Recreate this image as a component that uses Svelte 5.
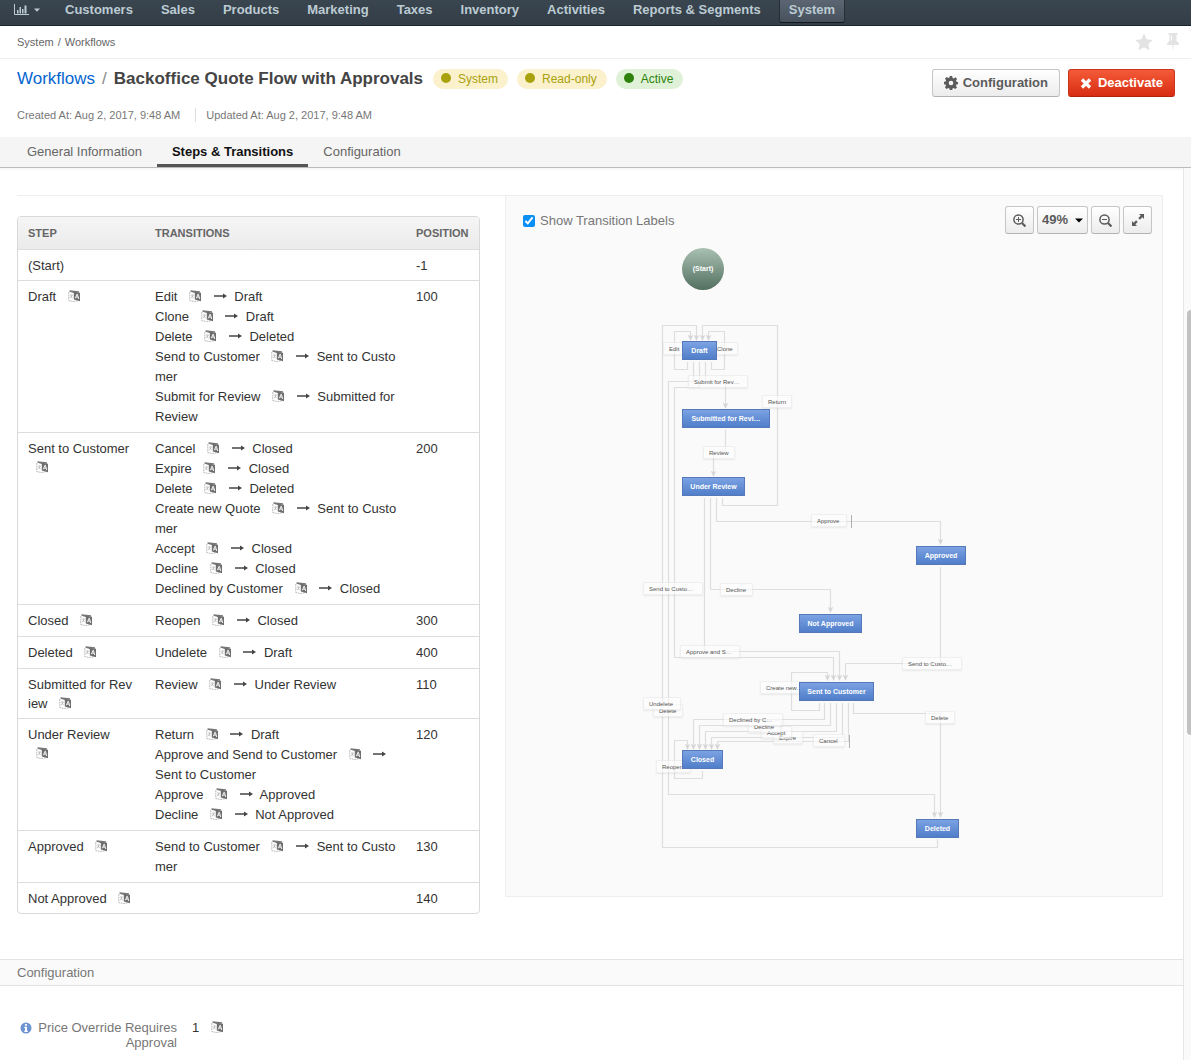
<script>
  const menu = ['Customers', 'Sales', 'Products', 'Marketing', 'Taxes', 'Inventory', 'Activities', 'Reports & Segments', 'System'];

  const badges = [
    { text: 'System', kind: 'warn' },
    { text: 'Read-only', kind: 'warn' },
    { text: 'Active', kind: 'ok' },
  ];

  const tabs = ['General Information', 'Steps & Transitions', 'Configuration'];

  const steps = [
    { name: '(Start)', position: '-1', plain: true, transitions: [] },
    {
      name: 'Draft',
      position: '100',
      transitions: [
        ['Edit', 'Draft'],
        ['Clone', 'Draft'],
        ['Delete', 'Deleted'],
        ['Send to Customer', 'Sent to Customer'],
        ['Submit for Review', 'Submitted for Review'],
      ],
    },
    {
      name: 'Sent to Customer',
      position: '200',
      transitions: [
        ['Cancel', 'Closed'],
        ['Expire', 'Closed'],
        ['Delete', 'Deleted'],
        ['Create new Quote', 'Sent to Customer'],
        ['Accept', 'Closed'],
        ['Decline', 'Closed'],
        ['Declined by Customer', 'Closed'],
      ],
    },
    { name: 'Closed', position: '300', transitions: [['Reopen', 'Closed']] },
    { name: 'Deleted', position: '400', transitions: [['Undelete', 'Draft']] },
    { name: 'Submitted for Review', position: '110', transitions: [['Review', 'Under Review']] },
    {
      name: 'Under Review',
      position: '120',
      transitions: [
        ['Return', 'Draft'],
        ['Approve and Send to Customer', 'Sent to Customer'],
        ['Approve', 'Approved'],
        ['Decline', 'Not Approved'],
      ],
    },
    { name: 'Approved', position: '130', transitions: [['Send to Customer', 'Sent to Customer']] },
    { name: 'Not Approved', position: '140', transitions: [] },
  ];

  // Diagram: nodes and labels are [text, x, y, width] on the canvas.
  const nodes = [
    ['Draft', 42, 101, 35],
    ['Submitted for Revi…', 42, 169, 88],
    ['Under Review', 42, 237, 63],
    ['Approved', 276, 306, 50],
    ['Not Approved', 159, 374, 63],
    ['Sent to Customer', 159, 442, 75],
    ['Closed', 42, 510, 41],
    ['Deleted', 276, 579, 43],
  ];

  const labels = [
    ['Edit', 23, 102, 22],
    ['Clone', 71, 102, 27],
    ['Submit for Rev…', 48, 135, 60],
    ['Return', 122, 155, 30],
    ['Review', 63, 206, 32],
    ['Approve', 171, 274, 36],
    ['Decline', 80, 343, 33],
    ['Send to Custo…', 3, 342, 60],
    ['Approve and S…', 40, 405, 60],
    ['Create new…', 120, 441, 61],
    ['Delete', 13, 464, 30],
    ['Undelete', 3, 457, 38],
    ['Expire', 133, 491, 30],
    ['Accept', 121, 486, 31],
    ['Decline', 108, 480, 33],
    ['Declined by C…', 83, 473, 60],
    ['Cancel', 173, 494, 32],
    ['Reopen', 16, 520, 35],
    ['Send to Custo…', 262, 417, 60],
    ['Delete', 285, 471, 30],
  ];

  const edges = [
    'M297.5 599V607.5H22.5V85.5H56.5V97',
    'M82.5 258V265.5H137.5V85.5H62.5V97',
    'M47.5 122V129.5H34.5V91.5H50.5V97',
    'M71.5 122V129.5H84.5V91.5H68.5V97',
    'M53.5 122V141.5H28.5V554.5H294.5V574',
    'M59.5 122V147.5H34.5V417.5H193.5V437',
    'M65.5 122V141.5H85.5V165',
    'M85.5 190V211.5H73.5V233',
    'M64.5 258V411.5H199.5V437',
    'M70.5 258V349.5H190.5V369',
    'M76.5 258V281.5H300.5V301',
    'M300.5 327V423.5H205.5V437',
    'M179.5 463V470.5H151.5V432.5H187.5V437',
    'M184.5 463V479.5H53.5V506',
    'M190.5 463V485.5H59.5V506',
    'M196.5 463V491.5H65.5V506',
    'M202.5 463V497.5H71.5V506',
    'M208.5 463V501.5H77.5V506',
    'M213.5 463V473.5H300.5V574',
    'M62.5 531V538.5H34.5V500.5H47.5V506',
  ];
</script>

{#snippet translate()}
  <svg class="translate" viewBox="0 0 12 12" aria-hidden="true">
    <path d="M.8 2v8.600l4.700.9 4.500-.8" fill="none" stroke="#bbb" stroke-dasharray="2 .6" />
    <path d="M1.500 .3L11 1.200v1.300L5.800 3 1.500 1.800z" fill="#777" />
    <path d="M2.200 5h2.400M4.200 5L2.400 8M3 6.300l1.600 1.500" fill="none" stroke="#aaa" stroke-width=".8" />
    <path d="M5.800 1.800L12 2.800v8.400L5.800 9.400z" fill="#6e6e6e" />
    <path d="M7.400 8.300L8.900 4.300h.5L10.700 9M8 7.100h2.200" fill="none" stroke="#fff" stroke-width=".9" />
  </svg>
{/snippet}

<nav class="menu" aria-label="Main">
  <button class="dash" aria-label="Dashboards">
    <svg width="15" height="12" viewBox="0 0 15 12"><path d="M.5 0v10.500H15" fill="none" stroke="currentColor" /><path d="M3 6h1.500v3.500H3zM5.500 3H7v6.500H5.500zM8 5h1.500v4.500H8zM10.500 1.500H12.500v8H10.500z" fill="currentColor" /></svg>
    <svg width="6" height="4" viewBox="0 0 6 4"><path d="M0 .5h6L3 3.800z" fill="currentColor" /></svg>
  </button>
  {#each menu as item}
    <a href="#menu" class:active={item === 'System'}>{item}</a>
  {/each}
</nav>

<div class="crumbs">
  <span class="path"><a href="#system">System</a><span>/</span><a href="#workflows">Workflows</a></span>
  <div class="marks">
    <button aria-label="Favorite"><svg width="18" height="18" viewBox="0 0 18 18"><path d="M9 .5l2.600 5.700 6.200.7-4.600 4.200 1.300 6.200L9 14.200l-5.500 3.100 1.300-6.200L.2 6.900l6.200-.7z" fill="#e3e3e3" /></svg></button>
    <button aria-label="Pin"><svg width="12" height="18" viewBox="0 0 12 18"><path d="M1.500 0h9v2H9.500v6c1.600.7 2.500 2 2.500 4H6.700L6 18l-.7-6H0c0-2 .9-3.300 2.500-4V2h-1z" fill="#e3e3e3" /><path d="M4.500 2.500v5" stroke="#fff" /></svg></button>
  </div>
</div>

<header>
  <div class="heading">
    <h1><a href="#workflows">Workflows</a><span class="slash">/</span>Backoffice Quote Flow with Approvals</h1>
    <div class="badges">
      {#each badges as badge}
        <span class="badge {badge.kind}"><i></i>{badge.text}</span>
      {/each}
    </div>
    <div class="actions">
      <button class="btn">
        <svg width="14" height="14" viewBox="0 0 14 14"><path fill-rule="evenodd" fill="currentColor" d="M5.800 0h2.400l.4 1.900 1.200.5 1.600-1.100 1.700 1.700L12 4.600l.5 1.200 1.500.3v2.100l-1.600.4-.5 1.100 1.100 1.700-1.700 1.700-1.600-1.100-1.200.5-.3 1.500H5.800l-.4-1.600-1.100-.5-1.700 1.100L.9 11.300 2 9.700l-.5-1.200L0 8.200V5.800l1.600-.3.5-1.200L1 2.700 2.700 1l1.600 1.100 1.200-.5zM7 4.700a2.300 2.300 0 1 0 0 4.600 2.300 2.300 0 0 0 0-4.600z" /></svg>
        Configuration
      </button>
      <button class="btn danger">
        <svg width="12" height="12" viewBox="0 0 12 12"><path d="M2 2.500l8 8M10 2.500l-8 8" stroke="currentColor" stroke-width="3.200" /></svg>
        Deactivate
      </button>
    </div>
  </div>
  <ul class="meta">
    <li>Created At: Aug 2, 2017, 9:48 AM</li>
    <li>Updated At: Aug 2, 2017, 9:48 AM</li>
  </ul>
</header>

<nav class="tabs" aria-label="Sections">
  {#each tabs as tab, i}
    <a href="#tab" class:active={i === 1}>{tab}</a>
  {/each}
</nav>

<div class="scroll">
  <main>
    <div class="columns">
      <section class="left">
        <table>
          <colgroup><col class="c1" /><col /><col class="c3" /></colgroup>
          <thead>
            <tr><th>Step</th><th>Transitions</th><th>Position</th></tr>
          </thead>
          <tbody>
            {#each steps as step}
              <tr>
                <td class="step">{step.name}{#if !step.plain}{' '}{@render translate()}{/if}</td>
                <td class="moves">
                  <ul>
                    {#each step.transitions as [name, target]}
                      <li>{name}{' '}{@render translate()}{' '}<svg class="arrow" viewBox="0 0 13 6" aria-hidden="true"><path d="M0 3h10" stroke="#444" stroke-width="1.500" /><path d="M9 .5L13 3 9 5.500z" fill="#444" /></svg>{' '}{target}</li>
                    {/each}
                  </ul>
                </td>
                <td>{step.position}</td>
              </tr>
            {/each}
          </tbody>
        </table>
      </section>

      <section class="flow">
        <div class="toolbar">
          <label><input type="checkbox" checked />Show Transition Labels</label>
          <div class="zoom">
            <button class="btn tool" aria-label="Zoom in">
              <svg width="13" height="13" viewBox="0 0 13 13" fill="none" stroke="currentColor"><circle cx="5.500" cy="5.500" r="4.600" stroke-width="1.500" /><path d="M9 9l3.500 3.500" stroke-width="2.200" /><path d="M3 5.500h5M5.500 3v5" /></svg>
            </button>
            <div class="level">
              <select class="btn" aria-label="Zoom level"><option>49%</option><option>100%</option></select>
              <svg width="8" height="5" viewBox="0 0 8 5"><path d="M0 .5h8L4 4.500z" /></svg>
            </div>
            <button class="btn tool" aria-label="Zoom out">
              <svg width="13" height="13" viewBox="0 0 13 13" fill="none" stroke="currentColor"><circle cx="5.500" cy="5.500" r="4.600" stroke-width="1.500" /><path d="M9 9l3.500 3.500" stroke-width="2.200" /><path d="M3 5.500h5" /></svg>
            </button>
            <button class="btn tool" aria-label="Fit to screen">
              <svg width="12" height="12" viewBox="0 0 12 12"><path d="M7 0h5v5l-1.700-1.700L7.900 5.700 6.300 4.100l2.400-2.400zM5 12H0V7l1.700 1.700 2.400-2.400 1.600 1.600-2.400 2.400z" fill="currentColor" /></svg>
            </button>
          </div>
        </div>
        <div class="canvas">
          <svg class="edges" width="340" height="640" viewBox="0 0 340 640" aria-hidden="true">
            <defs>
              <marker id="tip" viewBox="0 0 6 6" refX="2" refY="3" markerWidth="6" markerHeight="6" orient="auto" markerUnits="userSpaceOnUse"><path d="M0 .3L6 3 0 5.700 1 3z" fill="#d6d6d6" /></marker>
            </defs>
            {#each edges as d}
              <path {d} fill="none" stroke="#dedede" stroke-width="1.200" stroke-linejoin="round" marker-end="url(#tip)" />
            {/each}
            <path d="M211.500 275v13M209.500 495v13" stroke="#b0b0b0" />
          </svg>
          {#each labels as [text, x, y, w]}
            <span class="label" style:left="{x}px" style:top="{y}px" style:width="{w}px">{text}</span>
          {/each}
          {#each nodes as [text, x, y, w]}
            <span class="node" style:left="{x}px" style:top="{y}px" style:width="{w}px">{text}</span>
          {/each}
          <span class="start">(Start)</span>
        </div>
      </section>
    </div>

    <h2>Configuration</h2>
    <dl>
      <dt>
        <svg width="12" height="12" viewBox="0 0 12 12" aria-hidden="true"><circle cx="6" cy="6" r="5.500" fill="#6d93d1" /><path d="M5 2h2v1.800H5zM4.300 4.700H7v4h.8V10H4.300V8.700H5V6h-.7z" fill="#fff" /></svg>
        <span>Price Override Requires Approval</span>
      </dt>
      <dd>1{' '}{@render translate()}</dd>
    </dl>
  </main>
  <div class="rail"><div class="thumb"></div></div>
</div>

<style>
  :global(body) {
    margin: 0;
    overflow: hidden;
    background: #fff;
    color: #444;
    font: 13px/20px 'Liberation Sans', Arial, Helvetica, sans-serif;
  }
  :global(#app) {
    display: flex;
    flex-direction: column;
    height: 100vh;
  }
  a {
    color: inherit;
    text-decoration: none;
  }
  button {
    font: inherit;
    margin: 0;
  }
  ul {
    list-style: none;
    margin: 0;
    padding: 0;
  }

  .menu {
    display: flex;
    flex: none;
    gap: 8px;
    height: 25px;
    padding-left: 13px;
    background: linear-gradient(#3a464f, #333d47);
    border-bottom: 1px solid #1c242c;
    color: #bccbd3;
    font-weight: bold;
  }
  .menu a {
    box-sizing: border-box;
    height: 23px;
    padding: 0 10px;
  }
  .menu a.active {
    background: linear-gradient(#5b6672, #47515d);
    border: 1px solid #27303a;
    border-top: 0;
    border-bottom-color: #12181e;
    border-radius: 0 0 3px 3px;
    padding: 0 9px;
  }
  .dash {
    display: flex;
    align-items: center;
    gap: 5px;
    width: 34px;
    height: 20px;
    padding: 0 0 0 1px;
    border: 0;
    background: none;
    color: #bccbd3;
  }

  .crumbs {
    display: flex;
    flex: none;
    justify-content: space-between;
    align-items: center;
    height: 32px;
    padding: 0 12px 0 17px;
    border-bottom: 1px solid #eee;
    color: #666;
    font-size: 11px;
  }
  .path {
    display: flex;
    gap: 4px;
  }
  .marks {
    display: flex;
    gap: 14px;
  }
  .marks button {
    display: flex;
    padding: 0;
    border: 0;
    background: none;
  }

  header {
    box-sizing: border-box;
    flex: none;
    height: 78px;
    padding: 10px 16px 0 17px;
  }
  .heading {
    display: flex;
    align-items: flex-start;
    height: 28px;
  }
  h1 {
    margin: 0;
    font-size: 17px;
    line-height: 19px;
  }
  h1 a {
    color: #0566cf;
    font-weight: normal;
  }
  .slash {
    padding: 0 7px;
    color: #888;
    font-weight: normal;
  }
  .badges {
    display: flex;
    gap: 9px;
    margin-left: 10px;
  }
  .badge {
    display: flex;
    align-items: center;
    gap: 7px;
    height: 20px;
    padding: 0 10px 0 8px;
    border-radius: 10px;
    font-size: 12px;
  }
  .badge i {
    width: 10px;
    height: 10px;
    margin-bottom: 2px;
    border-radius: 50%;
    background: currentColor;
  }
  .warn {
    background: #fbf1cd;
    color: #a9a20c;
  }
  .ok {
    background: #dff2d8;
    color: #2e820c;
  }
  .actions {
    display: flex;
    gap: 8px;
    margin-left: auto;
  }
  .btn {
    box-sizing: border-box;
    display: flex;
    align-items: center;
    justify-content: center;
    gap: 5px;
    height: 28px;
    padding: 0 11px;
    border: 1px solid #c6c6c6;
    border-bottom-color: #b3b3b3;
    border-radius: 3px;
    background: linear-gradient(#fff, #ececec);
    color: #5b5b5b;
    font: bold 13px/20px 'Liberation Sans', Arial, sans-serif;
  }
  .danger {
    gap: 6px;
    background: linear-gradient(#f45b38, #d82c12);
    border-color: #c9341c;
    border-bottom-color: #b3200c;
    color: #fff;
  }
  .meta {
    display: flex;
    align-items: center;
    margin-top: 11px;
    color: #777;
    font-size: 11px;
    line-height: 14px;
  }
  .meta li + li {
    margin-left: 15px;
    padding-left: 10px;
    border-left: 1px solid #ddd;
  }

  .tabs {
    display: flex;
    flex: none;
    height: 30px;
    padding-left: 12px;
    background: #f5f5f5;
    border-bottom: 1px solid #bbb;
    color: #666;
    line-height: 30px;
  }
  .tabs a {
    box-sizing: border-box;
    padding: 0 15px;
  }
  .tabs .active {
    border-bottom: 3px solid #555;
    color: #111;
    font-weight: bold;
  }

  .scroll {
    display: flex;
    flex: 1;
    min-height: 0;
  }
  main {
    flex: 1;
    min-width: 0;
    border-top: 2px solid #f7f7f7;
    overflow: hidden;
  }
  .rail {
    box-sizing: border-box;
    width: 8px;
    padding: 142px 0 0 3px;
    border-left: 1px solid #e6e6e6;
    background: #fafafa;
  }
  .thumb {
    height: 425px;
    border-radius: 4px 0 0 4px;
    background: #c1c1c1;
  }

  .columns {
    display: grid;
    grid-template-columns: minmax(0, 488fr) minmax(0, 658fr);
    align-items: start;
    padding: 25px 20px 0 17px;
  }
  .left {
    padding: 20px 25px 0 0;
    border-top: 1px solid #eee;
  }
  table {
    width: 100%;
    table-layout: fixed;
    border: 1px solid #d9d9d9;
    border-radius: 4px;
    border-spacing: 0;
    overflow: hidden;
    line-height: 19px;
  }
  .c1 {
    width: 127px;
  }
  .c3 {
    width: 73px;
  }
  th {
    height: 32px;
    padding: 0 10px;
    background: linear-gradient(#f5f5f5, #ebebeb);
    color: #666;
    font-size: 11px;
    text-align: left;
    text-transform: uppercase;
  }
  td {
    padding: 6px 10px 5px;
    border-top: 1px solid #ddd;
    vertical-align: top;
    word-break: break-all;
    color: #333;
  }
  .step {
    padding-right: 12px;
  }
  .moves {
    padding-right: 8px;
  }
  td li {
    line-height: 20px;
  }
  .translate {
    width: 12px;
    height: 12px;
    margin-left: 8px;
    vertical-align: -1px;
  }
  .arrow {
    width: 13px;
    height: 6px;
    margin: 0 4px 0 9px;
    vertical-align: 2px;
  }

  .flow {
    border: 1px solid #eee;
    background: #fafafa;
  }
  .toolbar {
    display: flex;
    justify-content: space-between;
    align-items: center;
    padding: 10px 10px 0 17px;
  }
  .toolbar label {
    display: flex;
    align-items: center;
    gap: 5px;
    padding-top: 2px;
    color: #777;
  }
  .toolbar input {
    width: 12px;
    height: 12px;
    margin: 0;
    accent-color: #0a8ff5;
  }
  .zoom {
    display: flex;
    gap: 3px;
  }
  .tool {
    width: 29px;
    padding: 0;
  }
  .level {
    position: relative;
  }
  .level select {
    width: 51px;
    padding: 0 4px;
    appearance: none;
  }
  .level svg {
    position: absolute;
    right: 5px;
    top: 12px;
    pointer-events: none;
  }
  .canvas {
    position: relative;
    width: 340px;
    margin: 6px 0 0 134px;
    padding-bottom: 16px;
  }
  .edges {
    display: block;
  }
  .label,
  .node,
  .start {
    position: absolute;
    box-sizing: border-box;
    white-space: nowrap;
    overflow: hidden;
  }
  .label {
    height: 13px;
    padding: 1px 0 0 5px;
    border: 1px solid rgba(0, 0, 0, 0.05);
    border-radius: 1px;
    background: rgba(253, 253, 253, 0.6);
    box-shadow: 0 1px 2px rgba(0, 0, 0, 0.07);
    color: #555;
    font-size: 6px;
    line-height: 11px;
  }
  .node {
    height: 19px;
    border: 1px solid #5478b8;
    background: linear-gradient(#7ba2e3, #507ec9);
    color: #fff;
    font-size: 7px;
    font-weight: bold;
    line-height: 17px;
    text-align: center;
  }
  .start {
    left: 42px;
    top: 8px;
    width: 42px;
    height: 42px;
    border-radius: 50%;
    background: linear-gradient(#a9c0b2, #52705f);
    color: #fff;
    font-size: 7px;
    font-weight: bold;
    line-height: 42px;
    text-align: center;
  }

  h2 {
    margin: 45px 0 0;
    padding: 0 17px;
    border: 1px solid #e3e3e3;
    border-width: 1px 0;
    background: #fafafa;
    color: #777;
    font-size: 13px;
    font-weight: normal;
    line-height: 25px;
  }
  dl {
    display: flex;
    gap: 15px;
    margin: 0;
    padding: 34px 17px 0 20px;
    line-height: 15px;
  }
  dt {
    display: flex;
    gap: 5px;
    width: 157px;
    color: #777;
    text-align: right;
  }
  dt svg {
    flex: none;
    margin-top: 2px;
  }
  dt span {
    flex: 1;
  }
  dd {
    margin: 0;
    color: #333;
  }
</style>
